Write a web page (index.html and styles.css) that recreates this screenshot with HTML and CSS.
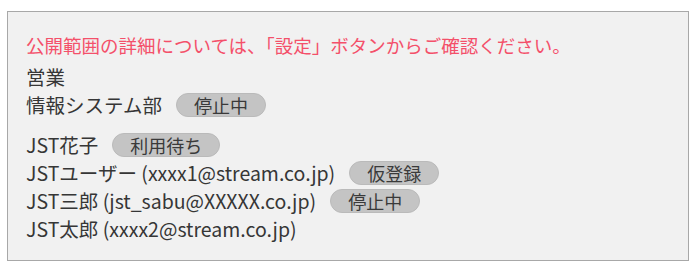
FILE: index.html
```html
<!DOCTYPE html>
<html lang="ja">
<head>
<meta charset="utf-8">
<link rel="stylesheet" href="styles.css">
</head>
<body>
<div class="panel">
  <p class="notice">公開範囲の詳細については、「設定」ボタンからご確認ください。</p>
  <div class="group">
    <div class="row">営業</div>
    <div class="row">情報システム部<span class="badge">停止中</span></div>
  </div>
  <div class="group">
    <div class="row">JST花子<span class="badge">利用待ち</span></div>
    <div class="row">JSTユーザー (xxxx1@stream.co.jp)<span class="badge">仮登録</span></div>
    <div class="row">JST三郎 (jst_sabu@XXXXX.co.jp)<span class="badge">停止中</span></div>
    <div class="row">JST太郎 (xxxx2@stream.co.jp)</div>
  </div>
</div>
</body>
</html>
```

FILE: styles.css
```css
html, body {
  margin: 0;
  padding: 0;
  background: #ffffff;
}
body {
  font-family: "Noto Sans CJK JP", "Noto Sans", sans-serif;
  color: #363636;
}
.panel {
  box-sizing: border-box;
  margin: 11px 0 0 7px;
  width: 682px;
  height: 250px;
  border: 1px solid #a8a8a8;
  background: #f1f1f1;
  padding: 19px 18px 0 18px;
}
.notice {
  margin: 0 0 4px 0;
  font-size: 18.5px;
  line-height: 28px;
  color: #f4506a;
}
.group {
  display: flex;
  flex-direction: column;
}
.group + .group {
  margin-top: 12px;
}
.row {
  display: flex;
  align-items: center;
  height: 28px;
  font-size: 19.5px;
  line-height: 28px;
  white-space: nowrap;
}
.badge {
  display: inline-flex;
  align-items: center;
  justify-content: center;
  box-sizing: border-box;
  height: 24px;
  margin-left: 14px;
  padding: 0 17px;
  border-radius: 12px;
  background: #c4c4c4;
  border: 1px solid #bababa;
  font-size: 18px;
  color: #3a3a3a;
}
```
